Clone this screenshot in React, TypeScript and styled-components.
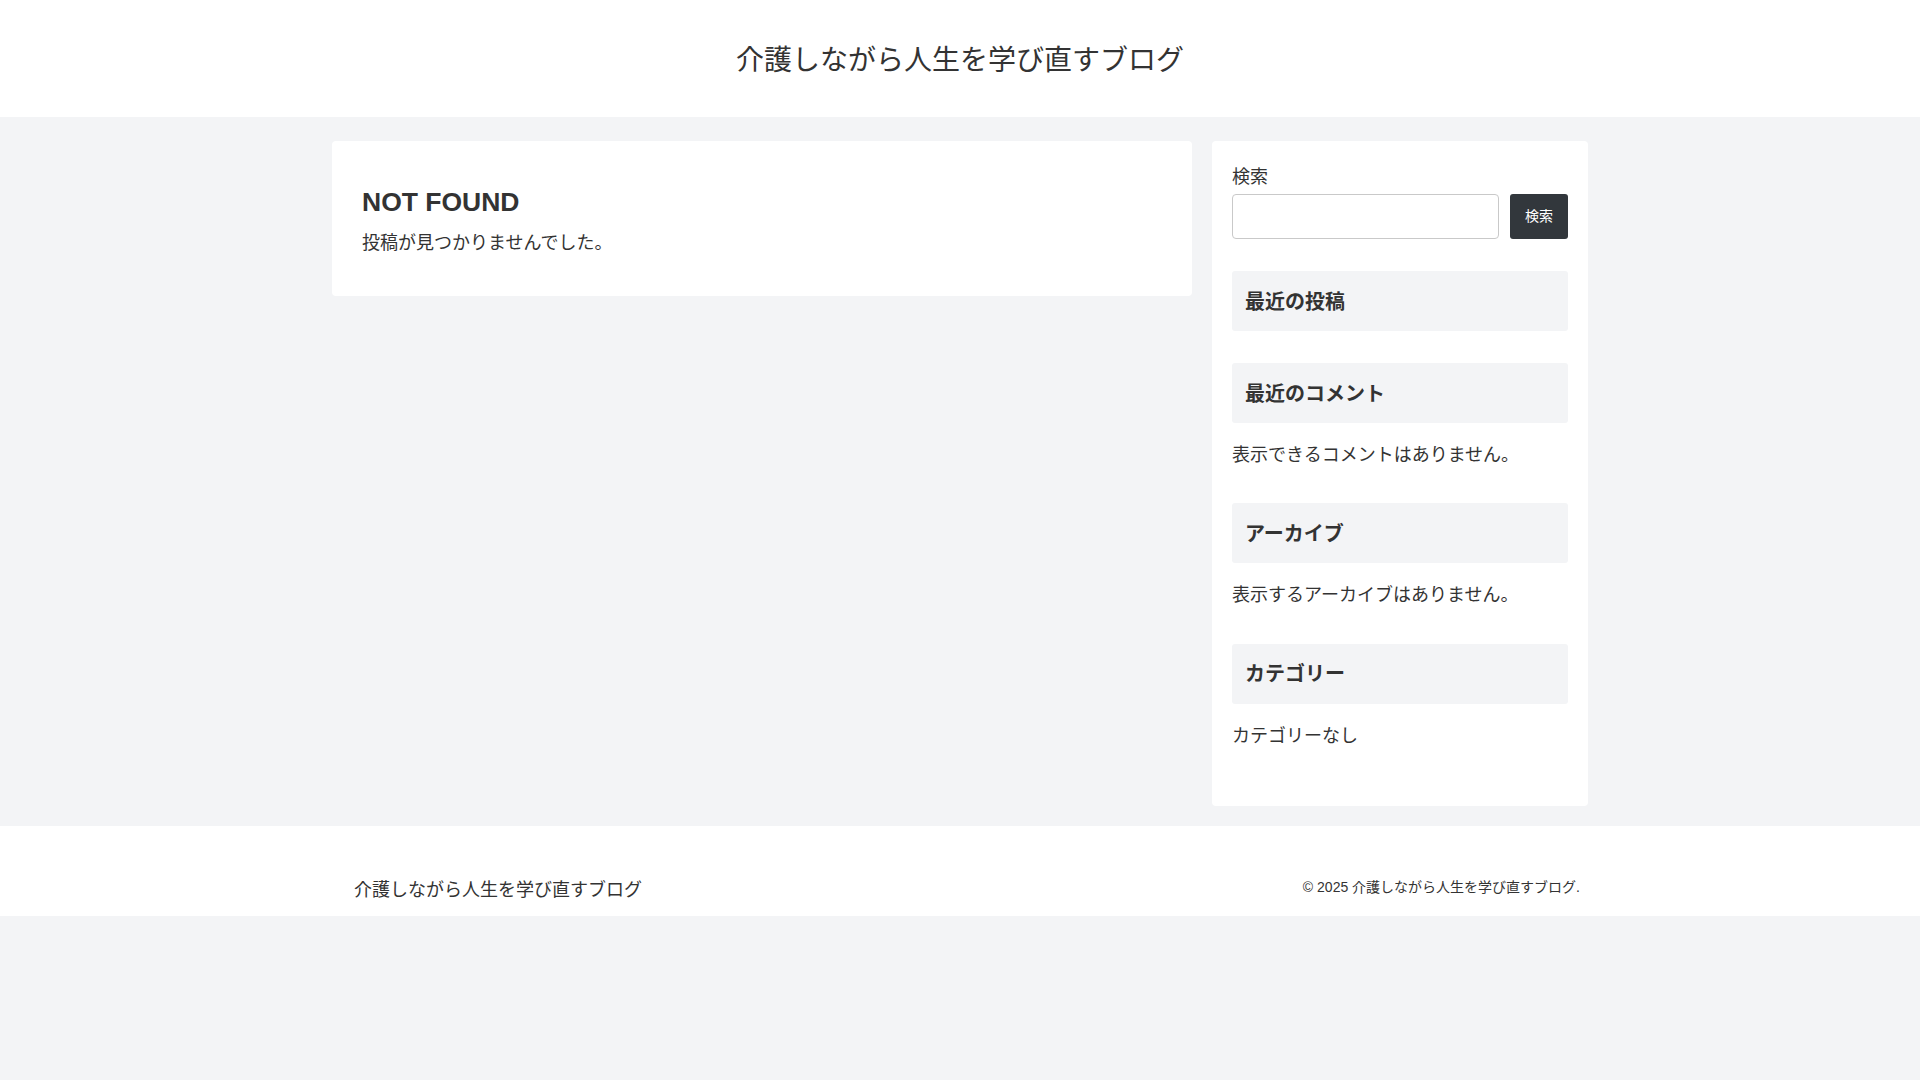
import React from "react";
import styled, { createGlobalStyle } from "styled-components";

const GlobalStyle = createGlobalStyle`
  html, body {
    margin: 0;
    padding: 0;
    background: #f3f4f6;
    color: #333;
    font-family: "Liberation Sans", Arial, "Noto Sans CJK JP", sans-serif;
  }
  * { box-sizing: border-box; }
`;

const Header = styled.header`
  height: 117px;
  background: #fff;
  display: flex;
  align-items: center;
  justify-content: center;
`;

const SiteTitle = styled.div`
  font-size: 28px;
  line-height: 1.4;
  color: #333;
  padding-top: 4px;
`;

const Main = styled.div`
  padding: 24px 0 20px;
`;

const Container = styled.div`
  width: 1256px;
  margin: 0 auto;
  display: flex;
  align-items: flex-start;
  gap: 20px;
`;

const ContentCard = styled.main`
  width: 860px;
  background: #fff;
  border-radius: 4px;
  padding: 42.5px 30px 39px;
`;

const PageTitle = styled.h1`
  margin: 0;
  font-size: 26.5px;
  line-height: 1.4;
  font-weight: 700;
  color: #333;
`;

const Text = styled.p<{ $top?: number }>`
  margin: ${(p) => p.$top ?? 0}px 0 0;
  font-size: 18px;
  line-height: 1.6;
  color: #333;
`;

const Sidebar = styled.aside`
  width: 376px;
  background: #fff;
  border-radius: 4px;
  padding: 22.5px 20px 22px;
`;

const Widget = styled.section`
  margin-bottom: 32px;
`;

const Label = styled.label`
  display: block;
  font-size: 18px;
  line-height: 1.5;
  color: #333;
  margin-bottom: 3.5px;
`;

const SearchRow = styled.div`
  display: flex;
  gap: 11px;
`;

const SearchInput = styled.input`
  flex: 1;
  height: 45px;
  border: 1px solid #c9c9c9;
  border-radius: 4px;
  background: #fff;
  padding: 0 10px;
  font-size: 16px;
  outline: none;
`;

const SearchButton = styled.button`
  height: 45px;
  width: 58px;
  background: #32373c;
  color: #fff;
  border: none;
  border-radius: 3px;
  font-family: inherit;
  font-size: 14px;
  padding: 0 0 3px;
  cursor: pointer;
`;

const WidgetTitle = styled.h2`
  margin: 0;
  height: 60px;
  display: flex;
  align-items: center;
  padding: 0 13px 2px;
  background: #f3f4f6;
  border-radius: 3px;
  font-size: 20px;
  font-weight: 700;
  color: #333;
`;

const WidgetText = styled.p`
  margin: 16px 0 0;
  font-size: 18px;
  line-height: 1.8;
  color: #333;
`;

const Footer = styled.footer`
  background: #fff;
  height: 90px;
`;

const FooterInner = styled.div`
  width: 1256px;
  margin: 0 auto;
  padding: 50px 8px 0 22px;
  display: flex;
  justify-content: space-between;
  align-items: flex-start;
`;

const FooterTitle = styled.div`
  font-size: 18px;
  line-height: 1.6;
  color: #333;
`;

const Copyright = styled.div`
  font-size: 14px;
  line-height: 1.6;
  color: #333;
  margin-top: 0;
`;

const blogName = "介護しながら人生を学び直すブログ";

export default function App() {
  const widgets: { title: string; text?: string }[] = [
    { title: "最近の投稿" },
    { title: "最近のコメント", text: "表示できるコメントはありません。" },
    { title: "アーカイブ", text: "表示するアーカイブはありません。" },
    { title: "カテゴリー", text: "カテゴリーなし" },
  ];
  return (
    <>
      <GlobalStyle />
      <Header>
        <SiteTitle>{blogName}</SiteTitle>
      </Header>
      <Main>
        <Container>
          <ContentCard>
            <PageTitle>NOT FOUND</PageTitle>
            <Text $top={8}>投稿が見つかりませんでした。</Text>
          </ContentCard>
          <Sidebar>
            <Widget>
              <Label htmlFor="s">検索</Label>
              <SearchRow>
                <SearchInput id="s" type="text" />
                <SearchButton type="button">検索</SearchButton>
              </SearchRow>
            </Widget>
            {widgets.map((w) => (
              <Widget key={w.title}>
                <WidgetTitle>{w.title}</WidgetTitle>
                {w.text && <WidgetText>{w.text}</WidgetText>}
              </Widget>
            ))}
          </Sidebar>
        </Container>
      </Main>
      <Footer>
        <FooterInner>
          <FooterTitle>{blogName}</FooterTitle>
          <Copyright>© 2025 {blogName}.</Copyright>
        </FooterInner>
      </Footer>
    </>
  );
}
